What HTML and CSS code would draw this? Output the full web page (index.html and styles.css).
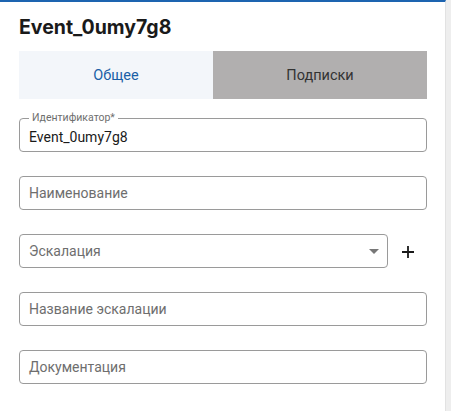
FILE: index.html
```html
<!DOCTYPE html>
<html lang="ru">
<head>
<meta charset="utf-8">
<link rel="stylesheet" href="styles.css">
</head>
<body>
<div class="panel">
  <h1 class="title">Event_0umy7g8</h1>
  <div class="tabs">
    <div class="tab tab-active">Общее</div>
    <div class="tab tab-inactive">Подписки</div>
  </div>
  <div class="form">
    <div class="field field-filled">
      <span class="legend">Идентификатор*</span>
      <span class="value">Event_0umy7g8</span>
    </div>
    <div class="field"><span class="placeholder">Наименование</span></div>
    <div class="row">
      <div class="field field-select">
        <span class="placeholder">Эскалация</span>
        <span class="caret"></span>
      </div>
      <div class="add">
        <svg width="14" height="14" viewBox="0 0 14 14"><path d="M7 1v12M1 7h12" stroke="#1a1a1a" stroke-width="1.8" fill="none"/></svg>
      </div>
    </div>
    <div class="field"><span class="placeholder">Название эскалации</span></div>
    <div class="field"><span class="placeholder">Документация</span></div>
  </div>
</div>
</body>
</html>
```
FILE: styles.css
```css
html, body {
  margin: 0;
  padding: 0;
  height: 100%;
}
body {
  background: #eeeeee;
  font-family: Roboto, "Noto Sans", sans-serif;
  color: #1a1a1a;
}
.panel {
  width: 446px;
  height: 100%;
  box-sizing: border-box;
  background: #ffffff;
  border-top: 2px solid #1d64b0;
  border-right: 1px solid #e2e2e2;
  padding: 0 18px 0 19px;
}
.title {
  margin: 0;
  padding-top: 14px;
  height: 35px;
  font-family: Inter, Roboto, sans-serif;
  font-size: 19.5px;
  font-weight: 700;
  line-height: 22px;
  color: #1a1a1a;
}
.tabs {
  display: flex;
  height: 48px;
}
.tab {
  display: flex;
  align-items: center;
  justify-content: center;
  font-size: 14.5px;
}
.tab-active {
  width: 194px;
  background: #f3f6fa;
  color: #1a5fa6;
}
.tab-inactive {
  flex: 1;
  background: #b1afaf;
  color: #333333;
}
.form {
  display: flex;
  flex-direction: column;
  gap: 24px;
  padding-top: 19px;
}
.row {
  display: flex;
  align-items: center;
}
.field {
  position: relative;
  box-sizing: border-box;
  height: 34px;
  border: 1px solid #9a9a9a;
  border-radius: 4px;
  display: flex;
  align-items: center;
  padding: 0 10px 0 9px;
  font-size: 14px;
}
.field-select {
  width: 369px;
}
.add {
  flex: 1;
  display: flex;
  justify-content: center;
  align-items: center;
  padding-top: 2px;
}
.placeholder {
  color: #6e6e6e;
}
.value {
  color: #1a1a1a;
  padding-top: 3px;
}
.legend {
  position: absolute;
  left: 9px;
  top: -7px;
  padding: 0 3px;
  background: #ffffff;
  font-size: 10.5px;
  line-height: 12px;
  color: #6e6e6e;
}
.caret {
  position: absolute;
  right: 8px;
  top: 14px;
  width: 0;
  height: 0;
  border-left: 5px solid transparent;
  border-right: 5px solid transparent;
  border-top: 5px solid #777777;
}
```
